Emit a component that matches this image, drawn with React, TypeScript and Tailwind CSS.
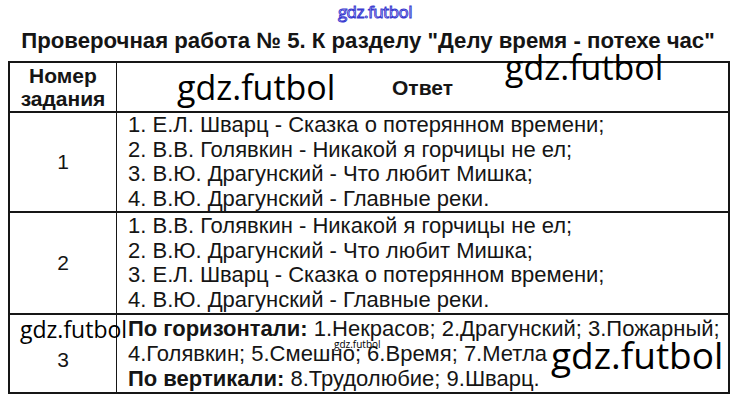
export default function App() {
  const row1 = [
    '1. Е.Л. Шварц - Сказка о потерянном времени;',
    '2. В.В. Голявкин - Никакой я горчицы не ел;',
    '3. В.Ю. Драгунский - Что любит Мишка;',
    '4. В.Ю. Драгунский - Главные реки.',
  ];
  const row2 = [
    '1. В.В. Голявкин - Никакой я горчицы не ел;',
    '2. В.Ю. Драгунский - Что любит Мишка;',
    '3. Е.Л. Шварц - Сказка о потерянном времени;',
    '4. В.Ю. Драгунский - Главные реки.',
  ];

  return (
    <div className="relative w-[750px] h-[401px] overflow-hidden bg-white text-[#151515] font-['Liberation_Sans',Arial,sans-serif]">
      {/* top watermark */}
      <div className="h-[22px] flex items-center justify-center pt-[1px]">
        <span className="font-['Open_Sans',sans-serif] text-[17px] leading-none text-white [-webkit-text-stroke:1px_#3a3ad0] tracking-[-0.5px]">
          gdz.futbol
        </span>
      </div>

      {/* title */}
      <h1 className="h-[39px] flex items-center justify-center pr-[14px] text-[22.2px] font-bold leading-none whitespace-nowrap">
        Проверочная работа № 5. К разделу "Делу время - потехе час"
      </h1>

      {/* table */}
      <div className="ml-[8px] w-[722px] border-2 border-[#161616]">
        <div className="grid grid-cols-[107px_1fr] h-[50px] border-b-2 border-[#161616]">
          <div className="flex flex-col items-center justify-center border-r border-[#161616] text-[21px] font-bold leading-[23px]">
            <span>Номер</span>
            <span>задания</span>
          </div>
          <div className="flex items-center justify-center text-[21px] font-bold pt-[2px]">Ответ</div>
        </div>

        <div className="grid grid-cols-[107px_1fr] h-[100px] border-b-2 border-[#161616]">
          <div className="flex items-center justify-center border-r border-[#161616] text-[21px]">1</div>
          <div className="flex flex-col justify-center pl-[11px] text-[22px] leading-[24.5px]">
            {row1.map((t) => (
              <span key={t} className="whitespace-nowrap">{t}</span>
            ))}
          </div>
        </div>

        <div className="grid grid-cols-[107px_1fr] h-[102px] border-b-2 border-[#161616]">
          <div className="flex items-center justify-center border-r border-[#161616] text-[21px]">2</div>
          <div className="flex flex-col justify-center pl-[11px] text-[22px] leading-[24.5px]">
            {row2.map((t) => (
              <span key={t} className="whitespace-nowrap">{t}</span>
            ))}
          </div>
        </div>

        <div className="grid grid-cols-[107px_1fr] h-[77px]">
          <div className="flex items-center justify-center border-r border-[#161616] text-[21px] pt-[12px]">3</div>
          <div className="flex flex-col justify-center pl-[11px] text-[22px] leading-[25px] whitespace-nowrap">
            <span>
              <b>По горизонтали:</b> 1.Некрасов; 2.Драгунский; 3.Пожарный;
            </span>
            <span>4.Голявкин; 5.Смешно; 6.Время; 7.Метла</span>
            <span>
              <b>По вертикали:</b> 8.Трудолюбие; 9.Шварц.
            </span>
          </div>
        </div>
      </div>

      {/* watermarks over the table */}
      <span className="absolute left-[177px] top-[70px] font-['Open_Sans',sans-serif] text-[34px] leading-none text-black">gdz.futbol</span>
      <span className="absolute left-[505px] top-[50px] font-['Open_Sans',sans-serif] text-[34px] leading-none text-black">gdz.futbol</span>
      <span className="absolute left-[20px] top-[318px] font-['Open_Sans',sans-serif] text-[23px] leading-none text-black">gdz.futbol</span>
      <span className="absolute left-[551px] top-[336px] font-['Open_Sans',sans-serif] text-[37px] leading-none text-black">gdz.futbol</span>
      <span className="absolute left-[334px] top-[339px] font-['Open_Sans',sans-serif] text-[10px] leading-none text-black">gdz.futbol</span>
    </div>
  );
}
